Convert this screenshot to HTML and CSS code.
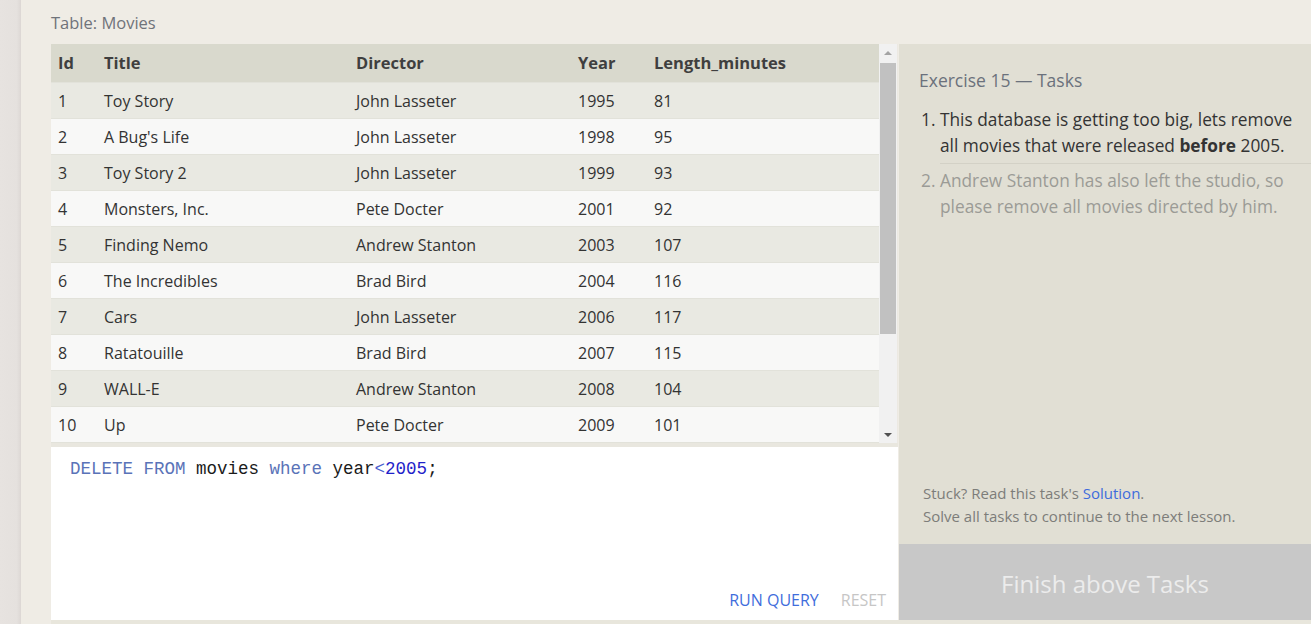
FILE: index.html
```html
<!DOCTYPE html>
<html>
<head>
<meta charset="utf-8">
<link rel="stylesheet" href="styles.css">
</head>
<body>
<div class="page">
  <div class="side-strip"></div>
  <div class="main">
    <div class="table-title">Table: Movies</div>
    <div class="workspace">
      <div class="left-col">
        <div class="table-wrap">
          <div class="table-view">
            <table class="data">
              <colgroup>
                <col class="c-id"><col class="c-title"><col class="c-dir"><col class="c-year"><col class="c-len">
              </colgroup>
              <thead>
                <tr><th>Id</th><th>Title</th><th>Director</th><th>Year</th><th>Length_minutes</th></tr>
              </thead>
              <tbody>
                <tr><td>1</td><td>Toy Story</td><td>John Lasseter</td><td>1995</td><td>81</td></tr>
                <tr><td>2</td><td>A Bug's Life</td><td>John Lasseter</td><td>1998</td><td>95</td></tr>
                <tr><td>3</td><td>Toy Story 2</td><td>John Lasseter</td><td>1999</td><td>93</td></tr>
                <tr><td>4</td><td>Monsters, Inc.</td><td>Pete Docter</td><td>2001</td><td>92</td></tr>
                <tr><td>5</td><td>Finding Nemo</td><td>Andrew Stanton</td><td>2003</td><td>107</td></tr>
                <tr><td>6</td><td>The Incredibles</td><td>Brad Bird</td><td>2004</td><td>116</td></tr>
                <tr><td>7</td><td>Cars</td><td>John Lasseter</td><td>2006</td><td>117</td></tr>
                <tr><td>8</td><td>Ratatouille</td><td>Brad Bird</td><td>2007</td><td>115</td></tr>
                <tr><td>9</td><td>WALL-E</td><td>Andrew Stanton</td><td>2008</td><td>104</td></tr>
                <tr><td>10</td><td>Up</td><td>Pete Docter</td><td>2009</td><td>101</td></tr>
                <tr><td>11</td><td>Toy Story 3</td><td>Lee Unkrich</td><td>2010</td><td>103</td></tr>
                <tr><td>12</td><td>Cars 2</td><td>John Lasseter</td><td>2011</td><td>120</td></tr>
                <tr><td>13</td><td>Brave</td><td>Brenda Chapman</td><td>2012</td><td>102</td></tr>
                <tr><td>14</td><td>Monsters University</td><td>Dan Scanlon</td><td>2013</td><td>110</td></tr>
              </tbody>
            </table>
          </div>
          <div class="scrollbar">
            <div class="arrow arrow-up"></div>
            <div class="track"><div class="thumb"></div></div>
            <div class="arrow arrow-down"></div>
          </div>
        </div>
        <div class="editor">
          <div class="code"><span class="kw">DELETE</span> <span class="kw">FROM</span> movies <span class="kw">where</span> year<span class="op">&lt;</span><span class="num">2005</span>;</div>
          <div class="editor-actions">
            <span class="btn-run">RUN QUERY</span>
            <span class="btn-reset">RESET</span>
          </div>
        </div>
      </div>
      <div class="right-col">
        <div class="tasks">
          <div class="tasks-title">Exercise 15 — Tasks</div>
          <ol class="task-list">
            <li class="task active">This database is getting too big, lets remove all movies that were released <b>before</b> 2005.</li>
            <li class="task">Andrew Stanton has also left the studio, so please remove all movies directed by him.</li>
          </ol>
          <div class="hint">
            <div>Stuck? Read this task's <span class="link">Solution</span>.</div>
            <div>Solve all tasks to continue to the next lesson.</div>
          </div>
        </div>
        <div class="finish">Finish above Tasks</div>
      </div>
    </div>
  </div>
</div>
</body>
</html>
```

FILE: styles.css
```css
* { box-sizing: border-box; }
html, body { margin: 0; padding: 0; }
body {
  width: 1311px;
  height: 624px;
  overflow: hidden;
  background: #efece5;
  font-family: "Open Sans", "Noto Sans", sans-serif;
}
.page {
  display: flex;
  height: 624px;
}
.side-strip {
  width: 21px;
  flex: none;
  background: linear-gradient(to right, #e7e3e0 0%, #e5e1de 80%, #dcd7d4 100%);
}
.main {
  flex: 1;
  display: flex;
  flex-direction: column;
  padding-left: 30px;
}
.table-title {
  height: 44px;
  font-size: 16.5px;
  color: #6f737a;
  padding-top: 11px;
  line-height: 24px;
}
.workspace {
  display: flex;
  height: 580px;
  border-bottom: 4px solid #e8e6dc;
}
.left-col {
  width: 847px;
  display: flex;
  flex-direction: column;
}
.table-wrap {
  height: 403px;
  flex: none;
  display: flex;
  border-bottom: 4px solid #e9e7df;
}
.table-view {
  width: 828px;
  overflow: hidden;
}
.data {
  width: 828px;
  border-collapse: collapse;
  table-layout: fixed;
  font-size: 16px;
  color: #333;
}
.c-id { width: 46px; }
.c-title { width: 252px; }
.c-dir { width: 222px; }
.c-year { width: 76px; }
.c-len { width: 232px; }
.data th {
  background: #d9d9cd;
  height: 38px;
  text-align: left;
  font-weight: 700;
  padding: 0 0 0 7px;
  color: #3f3f3f;
  font-size: 16.5px;
}
.data td {
  height: 36px;
  padding: 1px 0 0 7px;
  border-top: 1px solid #e2e2da;
  white-space: nowrap;
}
.data tbody tr:nth-child(odd) td { background: #e9e9e2; }
.data tbody tr:nth-child(even) td { background: #f8f8f7; }
.scrollbar {
  width: 19px;
  background: #f1f1f1;
  display: flex;
  flex-direction: column;
  border-right: 1px solid #ece9e2;
}
.arrow {
  height: 17px;
  flex: none;
  display: flex;
  justify-content: center;
  align-items: center;
}
.arrow::before {
  content: "";
  width: 0; height: 0;
  border-left: 4px solid transparent;
  border-right: 4px solid transparent;
}
.arrow-up::before { border-bottom: 4px solid #a3a3a3; }
.arrow-down::before { border-top: 4px solid #505050; }
.track {
  flex: 1;
  padding: 2px 1px 0 1px;
}
.thumb {
  height: 271px;
  background: #c1c1c1;
}
.editor {
  flex: 1;
  background: #fff;
  display: flex;
  flex-direction: column;
  justify-content: space-between;
  padding: 10px 0 8px 19px;
}
.code {
  font-family: "Liberation Mono", "DejaVu Sans Mono", monospace;
  font-size: 17.5px;
  color: #1a1a1a;
  line-height: 24px;
}
.kw { color: #5a73b8; }
.op { color: #4a5fd0; }
.num { color: #1f22c9; }
.editor-actions {
  display: flex;
  justify-content: flex-end;
  gap: 22px;
  padding-right: 12px;
  font-size: 16px;
  line-height: 24px;
}
.btn-run { color: #3f6ddc; }
.btn-reset { color: #c6c6c6; }
.right-col {
  flex: 1;
  display: flex;
  flex-direction: column;
  background: #e1dfd4;
  margin-left: 1px;
}
.tasks {
  flex: 1;
  display: flex;
  flex-direction: column;
  padding: 24px 0 0 20px;
}
.tasks-title {
  font-size: 17.5px;
  color: #6b717c;
  line-height: 24px;
  margin-bottom: 15px;
}
.task-list {
  margin: 0;
  padding: 0 0 0 21px;
  font-size: 17.3px;
  line-height: 26px;
}
.task {
  padding: 0 0 4px 0;
}
.task.active {
  color: #333;
  border-bottom: 1px solid #d3d1c6;
}
.task:not(.active) {
  color: #9b9b96;
  padding-top: 4px;
}
.task b { font-weight: 700; }
.hint {
  margin-top: auto;
  padding: 0 0 16px 4px;
  font-size: 15px;
  line-height: 23px;
  color: #7d7d7a;
}
.link { color: #3e6cdc; }
.finish {
  height: 76px;
  flex: none;
  background: #c8c8c8;
  color: #ececec;
  font-size: 24px;
  display: flex;
  align-items: center;
  justify-content: center;
  padding-top: 2px;
}
```
